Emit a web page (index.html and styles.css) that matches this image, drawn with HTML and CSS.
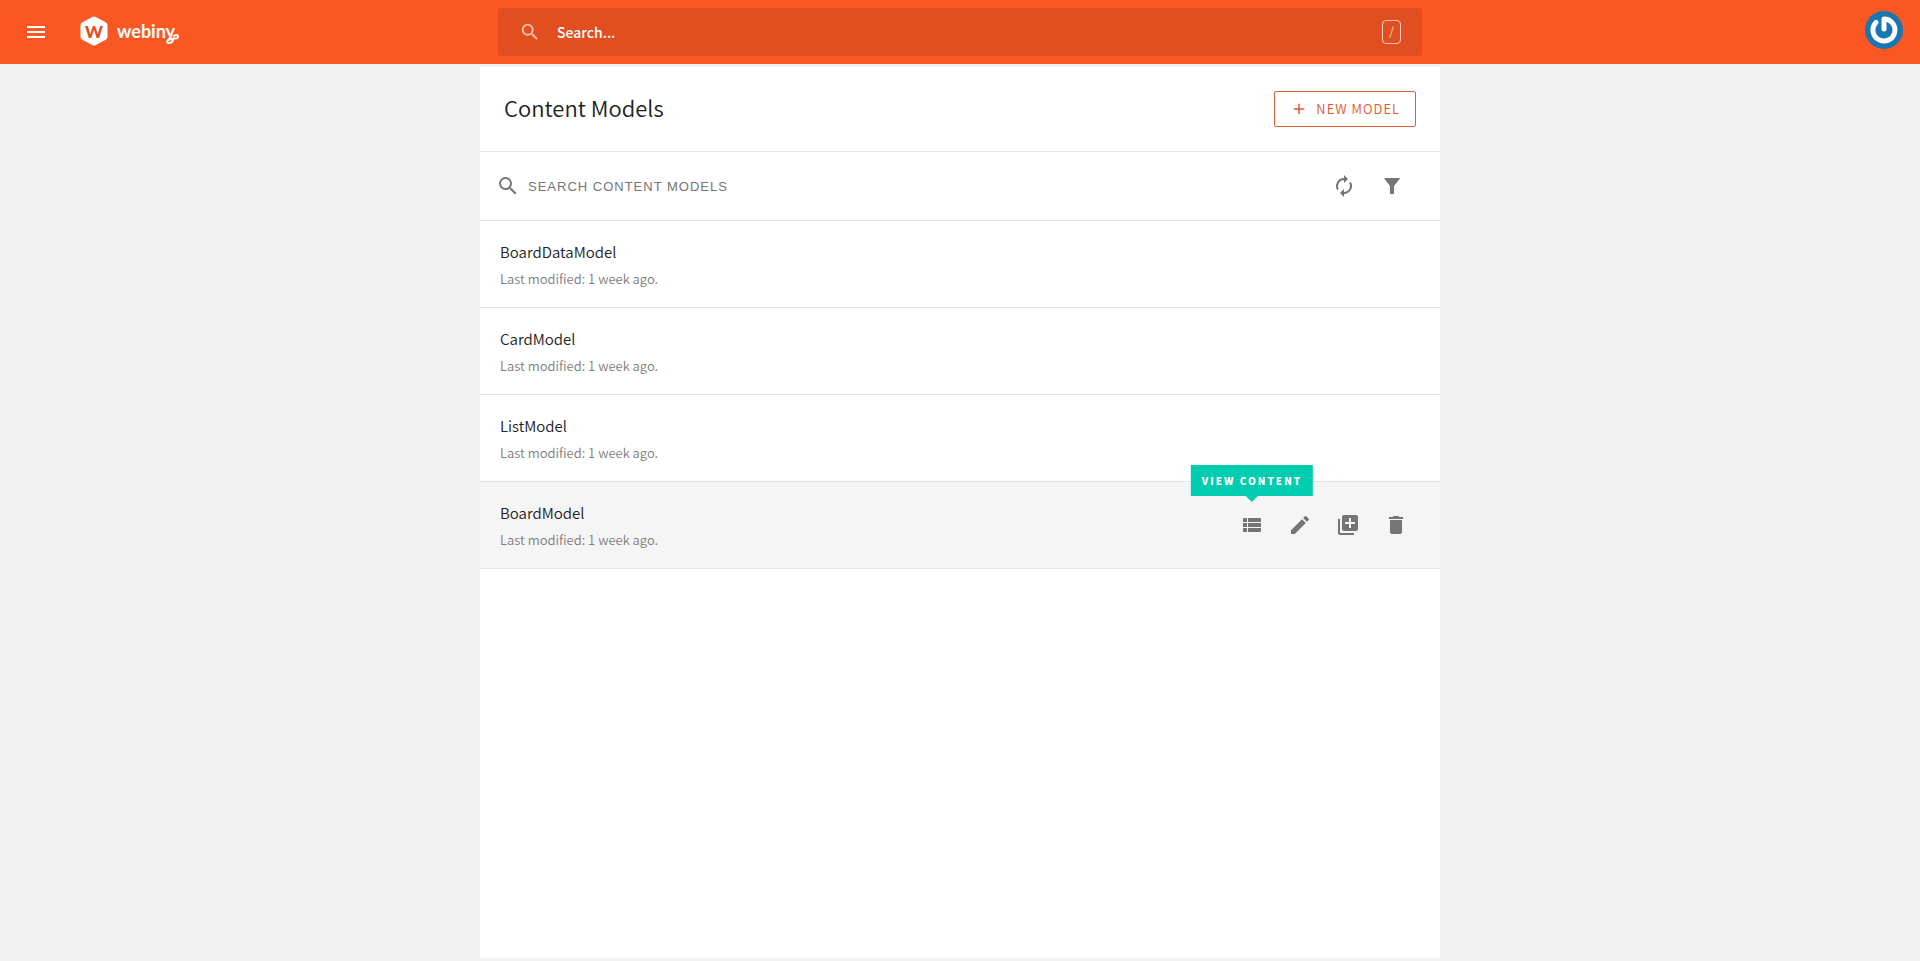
FILE: index.html
```html
<!DOCTYPE html>
<html lang="en">
<head>
    <meta charset="UTF-8">
    <meta name="viewport" content="width=device-width, initial-scale=1.0">
    <title>Content Models - Webiny</title>
    <link rel="stylesheet" href="styles.css">
</head>
<body>
    <header class="top-bar">
        <div class="top-left">
            <button type="button" class="icon-button menu-button" aria-label="Open menu">
                <svg viewBox="0 0 24 24"><path d="M3 18h18v-2H3v2zm0-5h18v-2H3v2zm0-7v2h18V6H3z"/></svg>
            </button>
            <a href="#" class="logo">
                <svg class="logo-mark" viewBox="0 0 28 30">
                    <path d="M12.2.9a3.6 3.6 0 0 1 3.6 0l9.9 5.4a3.2 3.2 0 0 1 1.8 2.9v11.6a3.2 3.2 0 0 1-1.8 2.9l-9.9 5.4a3.6 3.6 0 0 1-3.6 0l-9.9-5.4A3.2 3.2 0 0 1 .5 20.8V9.2a3.2 3.2 0 0 1 1.8-2.9z"/>
                    <text x="14" y="22" text-anchor="middle">W</text>
                </svg>
                <span class="logo-name">webiny<svg class="logo-curl" viewBox="0 0 14 14"><path d="M8 6.500c3-2 5-2 5 .5S9 8 5 9c-4 1-3 4-1 4s4-2 4.500-5"/></svg></span>
            </a>
        </div>
        <div class="global-search">
            <svg class="global-icon" viewBox="0 0 24 24"><path d="M15.5 14h-.79l-.28-.27A6.470 6.470 0 0 0 16 9.500 6.500 6.500 0 1 0 9.500 16c1.610 0 3.090-.590 4.230-1.570l.27.28v.79l5 4.990L20.490 19l-4.990-5zm-6 0a4.500 4.500 0 1 1 0-9 4.500 4.500 0 0 1 0 9z"/></svg>
            <input type="text" placeholder="Search..." aria-label="Search">
            <kbd>/</kbd>
        </div>
        <div class="top-right">
            <button type="button" class="avatar" aria-label="Account">
                <svg viewBox="0 0 38 38">
                    <circle cx="19" cy="19" r="19"/>
                    <path d="M19 18V8a11 11 0 1 1-8 3.400"/>
                </svg>
            </button>
        </div>
    </header>

    <main class="panel">
        <div class="panel-header">
            <h1>Content Models</h1>
            <button type="button" class="new-button">
                <svg viewBox="0 0 24 24"><path d="M19 13h-6v6h-2v-6H5v-2h6V5h2v6h6v2z"/></svg>
                New Model
            </button>
        </div>

        <div class="panel-search">
            <svg class="search-icon" viewBox="0 0 24 24"><path d="M15.5 14h-.79l-.28-.27A6.470 6.470 0 0 0 16 9.500 6.500 6.500 0 1 0 9.500 16c1.610 0 3.090-.590 4.230-1.570l.27.28v.79l5 4.990L20.490 19l-4.990-5zm-6 0a4.500 4.500 0 1 1 0-9 4.500 4.500 0 0 1 0 9z"/></svg>
            <input type="text" placeholder="SEARCH CONTENT MODELS" aria-label="Search content models">
            <button type="button" class="icon-button" aria-label="Refresh">
                <svg viewBox="0 0 24 24"><path d="M12 6v3l4-4-4-4v3a8 8 0 0 0-6.760 12.260L6.700 14.800A5.900 5.900 0 0 1 6 12a6 6 0 0 1 6-6zm6.760 1.740L17.300 9.200c.44.84.7 1.790.7 2.800a6 6 0 0 1-6 6v-3l-4 4 4 4v-3a8 8 0 0 0 6.760-12.260z"/></svg>
            </button>
            <button type="button" class="icon-button" aria-label="Filter">
                <svg viewBox="0 0 24 24"><path d="M4.250 4.500C4 4.200 4.200 4 4.500 4h15c.5 0 .6.300.3.700L14 12v7a1 1 0 0 1-1 1h-2a1 1 0 0 1-1-1v-7z"/></svg>
            </button>
        </div>

        <ul class="model-list">
            <li>
                <div class="model-text">
                    <h2>BoardDataModel</h2>
                    <p>Last modified: 1 week ago.</p>
                </div>
            </li>
            <li>
                <div class="model-text">
                    <h2>CardModel</h2>
                    <p>Last modified: 1 week ago.</p>
                </div>
            </li>
            <li>
                <div class="model-text">
                    <h2>ListModel</h2>
                    <p>Last modified: 1 week ago.</p>
                </div>
            </li>
            <li class="active">
                <div class="model-text">
                    <h2>BoardModel</h2>
                    <p>Last modified: 1 week ago.</p>
                </div>
                <div class="actions">
                    <button type="button" class="icon-button" aria-describedby="view-tip" aria-label="View content">
                        <svg viewBox="0 0 24 24"><path d="M4 5h3v4H3V6a1 1 0 0 1 1-1zM8 5h12a1 1 0 0 1 1 1v3H8zM3 10h4v4H3zM8 10h13v4H8zM3 15h4v4H4a1 1 0 0 1-1-1zM8 15h13v3a1 1 0 0 1-1 1H8z"/></svg>
                        <span class="tooltip" id="view-tip" role="tooltip">View content</span>
                    </button>
                    <button type="button" class="icon-button" aria-label="Edit">
                        <svg viewBox="0 0 24 24"><path d="M3 17.250V21h3.750L17.810 9.940l-3.750-3.750L3 17.250zM20.710 7.040a1 1 0 0 0 0-1.410l-2.340-2.340a1 1 0 0 0-1.410 0l-1.830 1.830 3.750 3.750 1.830-1.830z"/></svg>
                    </button>
                    <button type="button" class="icon-button" aria-label="Clone">
                        <svg viewBox="0 0 24 24"><path d="M4 6H2v14a2 2 0 0 0 2 2h14v-2H4V6zm16-4H8a2 2 0 0 0-2 2v12a2 2 0 0 0 2 2h12a2 2 0 0 0 2-2V4a2 2 0 0 0-2-2zm-1 9h-4v4h-2v-4H9V9h4V5h2v4h4v2z"/></svg>
                    </button>
                    <button type="button" class="icon-button" aria-label="Delete">
                        <svg viewBox="0 0 24 24"><path d="M6 19a2 2 0 0 0 2 2h8a2 2 0 0 0 2-2V7H6v12zM19 4h-3.500l-1-1h-5l-1 1H5v2h14V4z"/></svg>
                    </button>
                </div>
            </li>
        </ul>
    </main>
</body>
</html>
```
FILE: styles.css
```css
* {
    box-sizing: border-box;
}

body {
    display: flex;
    flex-direction: column;
    min-height: 100vh;
    margin: 0;
    background-color: #f1f1f1;
    color: #212121;
    font-family: "Noto Sans CJK SC", sans-serif;
    font-weight: 350;
}

button,
input {
    font-family: inherit;
    font-weight: inherit;
}

.top-bar {
    display: grid;
    grid-template-columns: 1fr minmax(0, 924px) 1fr;
    align-items: center;
    height: 64px;
    background-color: #fa5723;
    color: #fff;
}

.top-left,
.top-right {
    display: flex;
    align-items: center;
}

.top-left {
    padding-left: 12px;
}

.top-right {
    justify-content: flex-end;
    padding-right: 17px;
}

.icon-button {
    position: relative;
    display: flex;
    align-items: center;
    justify-content: center;
    width: 48px;
    height: 48px;
    padding: 0;
    border: none;
    background: none;
    color: #757575;
    cursor: pointer;
}

.icon-button svg {
    width: 24px;
    height: 24px;
    fill: currentColor;
}

.icon-button.menu-button {
    color: #fff;
}

.logo {
    display: flex;
    align-items: center;
    gap: 9px;
    margin-left: 20px;
    margin-bottom: 2px;
    color: #fff;
    text-decoration: none;
}

.logo-mark {
    width: 28px;
    height: 30px;
    fill: #fff;
}

.logo-mark text {
    fill: #e0501f;
    font-family: Lato, sans-serif;
    font-size: 17px;
    font-weight: 900;
}

.logo-name {
    position: relative;
    font-family: Lato, sans-serif;
    font-size: 18px;
    font-weight: bold;
    line-height: 24px;
}

.logo-curl {
    position: absolute;
    right: -4px;
    bottom: -1px;
    width: 14px;
    height: 14px;
    fill: none;
    stroke: #fff;
    stroke-width: 2;
}

.global-search {
    display: flex;
    align-items: center;
    height: 48px;
    padding: 0 21px;
    border-radius: 4px;
    background-color: #e14f20;
}

.global-icon {
    width: 22px;
    height: 22px;
    fill: #fcc2ad;
}

.global-search input {
    flex: 1;
    min-width: 0;
    padding: 0;
    margin-left: 16px;
    border: none;
    outline: none;
    background: none;
    color: #fff;
    font-size: 14px;
    font-weight: 500;
}

.global-search input::placeholder {
    color: #fff;
    opacity: 1;
}

.global-search kbd {
    width: 19px;
    height: 24px;
    border: 1px solid #f9cdbd;
    border-radius: 4px;
    color: #f9cdbd;
    font-family: inherit;
    font-size: 12px;
    font-weight: 400;
    line-height: 20px;
    text-align: center;
}

.avatar {
    width: 38px;
    height: 38px;
    padding: 0;
    margin-bottom: 4px;
    border: none;
    background: none;
    cursor: pointer;
}

.avatar svg {
    display: block;
}

.avatar circle {
    fill: #1a76b0;
}

.avatar path {
    fill: none;
    stroke: #fff;
    stroke-width: 5;
    stroke-linecap: round;
    stroke-linejoin: round;
}

.panel {
    flex: 1;
    width: 50%;
    margin: 3px auto;
    background-color: #fff;
}

.panel-header {
    display: flex;
    align-items: center;
    justify-content: space-between;
    height: 85px;
    padding: 0 24px;
    border-bottom: 1px solid #e4e4e4;
}

h1 {
    margin: 0 0 4px;
    font-size: 22px;
    font-weight: inherit;
    line-height: 32px;
}

.new-button {
    display: flex;
    align-items: center;
    height: 36px;
    padding: 0 15px;
    border: 1px solid #d9643c;
    border-radius: 2px;
    background: none;
    color: #e0582c;
    font-size: 13px;
    letter-spacing: 1px;
    line-height: 32px;
    text-transform: uppercase;
    cursor: pointer;
}

.new-button svg {
    width: 18px;
    height: 18px;
    margin-right: 8px;
    fill: currentColor;
}

.panel-search {
    display: flex;
    align-items: center;
    height: 69px;
    padding: 0 24px 0 16px;
    border-bottom: 1px solid #e4e4e4;
}

.search-icon {
    width: 24px;
    height: 24px;
    fill: #757575;
}

.panel-search input {
    flex: 1;
    min-width: 0;
    padding: 0;
    margin-left: 8px;
    border: none;
    outline: none;
    background: none;
    font-family: "Liberation Sans", Arial, sans-serif;
    font-size: 13px;
    letter-spacing: 1px;
}

.panel-search input::placeholder {
    color: #757575;
    opacity: 1;
}

.model-list {
    padding: 0;
    margin: 0;
    list-style: none;
}

.model-list li {
    display: flex;
    align-items: center;
    justify-content: space-between;
    height: 87px;
    padding: 0 20px;
    border-bottom: 1px solid #e4e4e4;
}

.model-list .active {
    background-color: #f5f5f5;
}

h2 {
    margin: 0;
    font-size: 15px;
    font-weight: inherit;
    line-height: 28px;
}

p {
    margin: 0;
    color: #7d7d7d;
    font-size: 13px;
    line-height: 25px;
}

.actions {
    display: flex;
}

.tooltip {
    position: absolute;
    bottom: 53px;
    left: 50%;
    padding: 0 11px;
    background-color: #00ccb0;
    color: #fff;
    font-size: 10px;
    font-weight: 900;
    letter-spacing: 2px;
    line-height: 31px;
    text-transform: uppercase;
    white-space: nowrap;
    transform: translateX(-50%);
}

.tooltip::after {
    content: "";
    position: absolute;
    top: 100%;
    left: 50%;
    border: 6px solid transparent;
    border-top-color: #00ccb0;
    border-bottom: none;
    transform: translateX(-50%);
}
```
